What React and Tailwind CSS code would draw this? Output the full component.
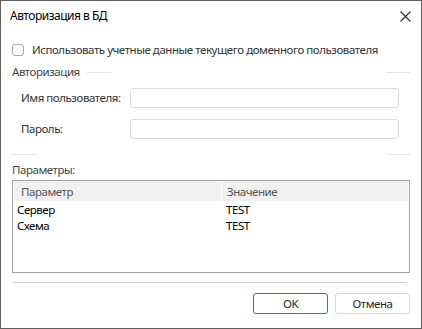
import React from "react"

const rows = [
  { name: "Сервер", value: "TEST" },
  { name: "Схема", value: "TEST" },
]

function CloseIcon() {
  return (
    <svg width="11" height="11" viewBox="0 0 11 11" className="block">
      <path d="M0.5 0.5 L10.5 10.5 M10.5 0.5 L0.5 10.5" stroke="#2b2b2b" strokeWidth="1.1" fill="none" />
    </svg>
  )
}

function FieldRow({ label, className }) {
  return (
    <div className={`flex items-center h-[20px] ${className}`}>
      <span className="ml-[9px] w-[109px] text-[#333]">{label}</span>
      <div className="flex-1 h-[20px] mr-[11px] rounded-[3px] border border-[#dcdcdc] bg-white"></div>
    </div>
  )
}

export default function App() {
  return (
    <div
      className="w-[422px] h-[329px] border border-[#5f5f5f] bg-white flex flex-col text-[11.5px] tracking-[-0.45px] leading-none whitespace-nowrap text-[#1f1f1f]"
      style={{ fontFamily: '"Noto Sans", "Liberation Sans", sans-serif' }}
    >
      {/* Title bar */}
      <div className="h-[30px] flex items-center justify-between pl-[9px] pr-[10px]">
        <span className="text-black text-[12px] tracking-[-0.5px]">Авторизация в БД</span>
        <CloseIcon />
      </div>

      <div className="px-[11px] flex flex-col">
        {/* Domain checkbox */}
        <div className="mt-[9px] h-[20px] flex items-center">
          <div className="w-[12px] h-[12px] rounded-[3px] border border-[#a8a8a8] bg-white"></div>
          <span className="ml-[8px] text-[#333]">Использовать учетные данные текущего доменного пользователя</span>
        </div>

        {/* Group header */}
        <div className="mt-[2px] h-[20px] flex items-center">
          <span className="text-[#444]">Авторизация</span>
          <div className="ml-[7px] w-[24px] h-px bg-[#e6e6e6]"></div>
          <div className="flex-1"></div>
          <div className="w-[24px] h-px bg-[#e6e6e6]"></div>
        </div>

        <FieldRow label="Имя пользователя:" className="mt-[6px]" />
        <FieldRow label="Пароль:" className="mt-[11px]" />

        {/* Separator */}
        <div className="mt-[15px] h-px flex">
          <div className="w-[24px] h-px bg-[#e6e6e6]"></div>
          <div className="flex-1"></div>
          <div className="w-[24px] h-px bg-[#e6e6e6]"></div>
        </div>

        <div className="mt-[7px] h-[16px] flex items-center text-[#444]">Параметры:</div>

        {/* Parameters table */}
        <div className="mt-[2px] h-[93px] border border-[#a3a3a3] px-[1px] flex flex-col">
          <div className="h-[20px] flex bg-[#f0f0f0] text-[#555]">
            <div className="w-[207px] pl-[7px] pt-[1px] flex items-center">Параметр</div>
            <div className="w-px bg-white"></div>
            <div className="flex-1 pl-[5px] pt-[1px] flex items-center">Значение</div>
          </div>
          <div className="pt-[1px] flex flex-col">
            {rows.map((r) => (
              <div key={r.name} className="h-[16px] flex text-black">
                <div className="w-[208px] pl-[3px] flex items-center">{r.name}</div>
                <div className="flex-1 pl-[4px] flex items-center">{r.value}</div>
              </div>
            ))}
          </div>
        </div>

        {/* Bottom separator */}
        <div className="mt-[9px] ml-[1px] mr-[3px] h-px bg-[#cccccc]"></div>

        {/* Buttons */}
        <div className="mt-[10px] flex justify-end gap-[7px]">
          <button className="w-[75px] h-[21px] rounded-[3px] border border-[#1f78c8] bg-white text-[#1f1f1f] leading-none">
            OK
          </button>
          <button className="w-[75px] h-[21px] rounded-[3px] border border-[#d6d6d6] bg-white text-[#1f1f1f] leading-none">
            Отмена
          </button>
        </div>
      </div>
    </div>
  )
}
